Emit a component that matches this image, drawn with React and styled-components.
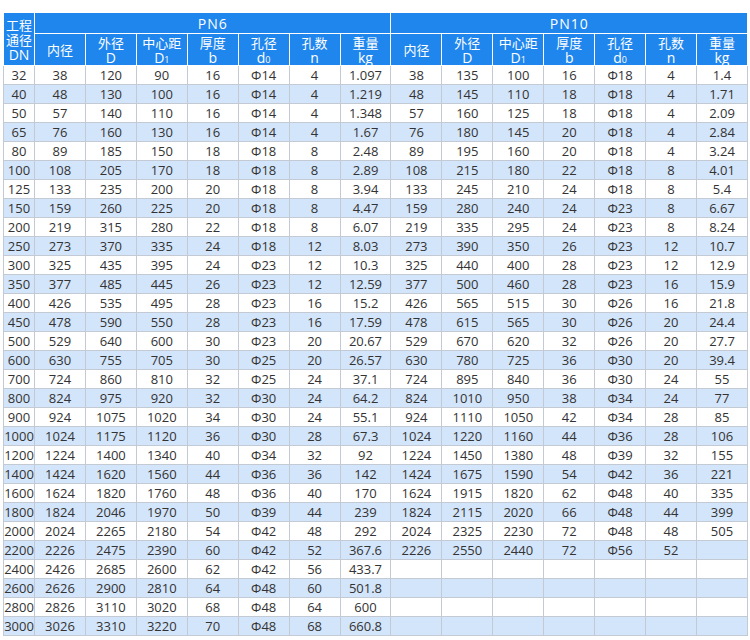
import React from "react";
import styled, {createGlobalStyle} from "styled-components";

const GlobalStyle = createGlobalStyle`
    body {
        margin: 0;
        background: #fff;
        font-family: "Open Sans", "Noto Sans CJK SC", sans-serif;
    }
`;

const Page = styled.div`
    padding: 13px 2px 6px 3px;
`;

const Table = styled.table`
    width: 745px;
    border-collapse: collapse;
    table-layout: fixed;
    color: #333;
    font-size: 13px;
`;

const HeadCell = styled.th`
    background: #1f86ee;
    color: #fff;
    font-weight: normal;
    font-family: "Noto Sans CJK SC", "Open Sans", sans-serif;
    font-size: 13px;
    line-height: 15px;
    padding: 0;
    height: ${p => p.$h}px;
    border: 1px solid rgba(255, 255, 255, 0.55);
    border-top: none;
    letter-spacing: ${p => p.$spaced ? "1px" : "0"};
    white-space: nowrap;
    overflow: hidden;
`;

const Line = styled.div`
    height: 15px;
    line-height: 15px;
`;

const Latin = styled.span`
    font-family: "Open Sans", sans-serif;
    font-size: 14px;
`;

const Sub = styled.span`
    font-size: 9px;
`;

const Row = styled.tr`
    background: ${p => p.$alt ? "#d3e5fa" : "#fff"};
`;

const Cell = styled.td`
    height: 18px;
    padding: 0;
    text-align: center;
    white-space: nowrap;
    line-height: 17px;
    border: 1px solid #c3cad3;
`;

const cols = [
    {label: "内径"},
    {label: "外径", sub: "D"},
    {label: "中心距", sub: "D", idx: "1"},
    {label: "厚度", sub: "b"},
    {label: "孔径", sub: "d", idx: "0"},
    {label: "孔数", sub: "n"},
    {label: "重量", sub: "kg"},
];

const rows = [
    ["32", "38 120 90 16 Φ14 4 1.097", "38 135 100 16 Φ18 4 1.4"],
    ["40", "48 130 100 16 Φ14 4 1.219", "48 145 110 18 Φ18 4 1.71"],
    ["50", "57 140 110 16 Φ14 4 1.348", "57 160 125 18 Φ18 4 2.09"],
    ["65", "76 160 130 16 Φ14 4 1.67", "76 180 145 20 Φ18 4 2.84"],
    ["80", "89 185 150 18 Φ18 8 2.48", "89 195 160 20 Φ18 4 3.24"],
    ["100", "108 205 170 18 Φ18 8 2.89", "108 215 180 22 Φ18 8 4.01"],
    ["125", "133 235 200 20 Φ18 8 3.94", "133 245 210 24 Φ18 8 5.4"],
    ["150", "159 260 225 20 Φ18 8 4.47", "159 280 240 24 Φ23 8 6.67"],
    ["200", "219 315 280 22 Φ18 8 6.07", "219 335 295 24 Φ23 8 8.24"],
    ["250", "273 370 335 24 Φ18 12 8.03", "273 390 350 26 Φ23 12 10.7"],
    ["300", "325 435 395 24 Φ23 12 10.3", "325 440 400 28 Φ23 12 12.9"],
    ["350", "377 485 445 26 Φ23 12 12.59", "377 500 460 28 Φ23 16 15.9"],
    ["400", "426 535 495 28 Φ23 16 15.2", "426 565 515 30 Φ26 16 21.8"],
    ["450", "478 590 550 28 Φ23 16 17.59", "478 615 565 30 Φ26 20 24.4"],
    ["500", "529 640 600 30 Φ23 20 20.67", "529 670 620 32 Φ26 20 27.7"],
    ["600", "630 755 705 30 Φ25 20 26.57", "630 780 725 36 Φ30 20 39.4"],
    ["700", "724 860 810 32 Φ25 24 37.1", "724 895 840 36 Φ30 24 55"],
    ["800", "824 975 920 32 Φ30 24 64.2", "824 1010 950 38 Φ34 24 77"],
    ["900", "924 1075 1020 34 Φ30 24 55.1", "924 1110 1050 42 Φ34 28 85"],
    ["1000", "1024 1175 1120 36 Φ30 28 67.3", "1024 1220 1160 44 Φ36 28 106"],
    ["1200", "1224 1400 1340 40 Φ34 32 92", "1224 1450 1380 48 Φ39 32 155"],
    ["1400", "1424 1620 1560 44 Φ36 36 142", "1424 1675 1590 54 Φ42 36 221"],
    ["1600", "1624 1820 1760 48 Φ36 40 170", "1624 1915 1820 62 Φ48 40 335"],
    ["1800", "1824 2046 1970 50 Φ39 44 239", "1824 2115 2020 66 Φ48 44 399"],
    ["2000", "2024 2265 2180 54 Φ42 48 292", "2024 2325 2230 72 Φ48 48 505"],
    ["2200", "2226 2475 2390 60 Φ42 52 367.6", "2226 2550 2440 72 Φ56 52 -"],
    ["2400", "2426 2685 2600 62 Φ42 56 433.7", ""],
    ["2600", "2626 2900 2810 64 Φ48 60 501.8", ""],
    ["2800", "2826 3110 3020 68 Φ48 64 600", ""],
    ["3000", "3026 3310 3220 70 Φ48 68 660.8", ""],
];

const split = s => {
    const v = s ? s.split(" ").map(x => x === "-" ? "" : x) : [];
    while (v.length < 7) v.push("");
    return v;
};

const ColHead = ({col}) => (
    <HeadCell $h={31}>
        <Line>{col.label}</Line>
        {col.sub && <Line><Latin>{col.sub}{col.idx && <Sub>{col.idx}</Sub>}</Latin></Line>}
    </HeadCell>
);

export default function App() {
    return (
        <Page>
            <GlobalStyle/>
            <Table>
                <colgroup>
                    <col style={{width: 31}}/>
                    {Array.from({length: 14}).map((_, i) => <col key={i}/>)}
                </colgroup>
                <thead>
                <tr>
                    <HeadCell rowSpan={2} $h={51}>
                        <Line>工程</Line>
                        <Line>通径</Line>
                        <Line><Latin>DN</Latin></Line>
                    </HeadCell>
                    <HeadCell colSpan={7} $h={20} $spaced><Latin>PN6</Latin></HeadCell>
                    <HeadCell colSpan={7} $h={20} $spaced><Latin>PN10</Latin></HeadCell>
                </tr>
                <tr>
                    {cols.map((c, i) => <ColHead key={"a" + i} col={c}/>)}
                    {cols.map((c, i) => <ColHead key={"b" + i} col={c}/>)}
                </tr>
                </thead>
                <tbody>
                {rows.map(([dn, pn6, pn10], i) => (
                    <Row key={dn} $alt={i % 2 === 1}>
                        <Cell>{dn}</Cell>
                        {split(pn6).map((v, j) => <Cell key={"a" + j}>{v}</Cell>)}
                        {split(pn10).map((v, j) => <Cell key={"b" + j}>{v}</Cell>)}
                    </Row>
                ))}
                </tbody>
            </Table>
        </Page>
    );
}
